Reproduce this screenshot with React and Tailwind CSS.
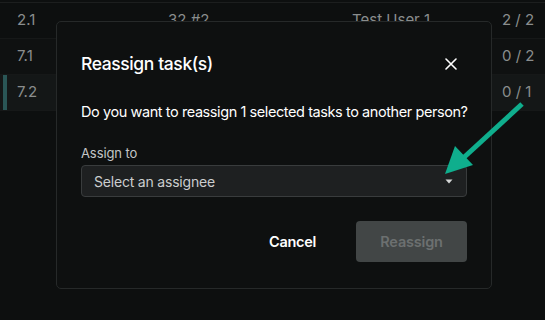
import React from 'react';

const rows = [
	{id: '2.1', name: '32 #2', user: 'Test User 1', count: '2 / 2'},
	{id: '7.1', name: '', user: '', count: '0 / 2'},
	{id: '7.2', name: '', user: '', count: '0 / 1', active: true},
];

function TaskRow({row}) {
	return (
		<div className={`relative flex h-[36px] items-center border-b border-[#161818] text-[15px] text-[#8a8d8d] ${row.active ? 'bg-[#141717]' : row.id === '7.1' ? 'bg-[#0f1111]' : 'bg-[#0d0f0f]'}`}>
			{row.active ? <span className="absolute left-[3px] top-0 h-full w-[4px] bg-[#2a5656]"></span> : null}
			<span className="w-[168px] pl-[17px]">{row.id}</span>
			<span className="w-[184px]">{row.name}</span>
			<span className="w-[150px]">{row.user}</span>
			<span>{row.count}</span>
		</div>
	);
}

function ReassignDialog() {
	return (
		<div className="absolute left-[56px] top-[21px] w-[436px] rounded-[5px] border border-[#262929] bg-[#0e1010] px-6 pt-7 pb-[26px]">
			<div className="flex items-center justify-between">
				<h2 className="text-[17.5px] leading-[28px] font-medium tracking-[-0.4px] text-white">Reassign task(s)</h2>
				<button className="mr-[10px] text-white">
					<svg width="12" height="12" viewBox="0 0 12 12" fill="none" stroke="currentColor" strokeWidth="1.6" strokeLinecap="round">
						<path d="M1 1 L11 11 M11 1 L1 11" />
					</svg>
				</button>
			</div>
			<p className="mt-[22px] whitespace-nowrap text-[14.5px] leading-[24px] tracking-[-0.42px] text-white">Do you want to reassign 1 selected tasks to another person?</p>
			<label className="mt-[21px] mb-1 block text-[13px] leading-[16px] tracking-[-0.1px] text-[#c3c6c6]">Assign to</label>
			<div className="flex h-[32px] items-center justify-between rounded-[4px] border border-[#393c3d] bg-[#1e2021] pl-3 pr-[13px]">
				<span className="text-[14px] tracking-[-0.2px] text-[#cbcdce]">Select an assignee</span>
				<svg width="8" height="5" viewBox="0 0 8 5">
					<path d="M0.5 0.5 L7.5 0.5 L4 4.5 Z" fill="#d4d6d6" />
				</svg>
			</div>
			<div className="mt-6 flex items-center justify-end gap-[40px]">
				<button className="text-[14.5px] font-semibold tracking-[-0.3px] text-white">Cancel</button>
				<button className="h-[41px] w-[111px] rounded-[4px] bg-[#424646] text-[14.5px] font-semibold tracking-[-0.2px] text-[#6c7070]">Reassign</button>
			</div>
		</div>
	);
}

export default function App() {
	return (
		<div className="relative h-[320px] w-[545px] overflow-hidden bg-[#0d0f0f]" style={{fontFamily: 'Inter, "Noto Sans", sans-serif'}}>
			<div className="h-[3px] border-b border-[#1c1e1e]"></div>
			{rows.map(r => <TaskRow key={r.id} row={r} />)}
			<ReassignDialog />
			{/* annotation arrow */}
			<svg className="pointer-events-none absolute left-0 top-0" width="545" height="320">
				<line x1="522" y1="104" x2="460" y2="161" stroke="#0fae8d" strokeWidth="5" strokeLinecap="butt" />
				<path d="M445 174 L455 146 L473 165 Z" fill="#0fae8d" />
			</svg>
		</div>
	);
}
